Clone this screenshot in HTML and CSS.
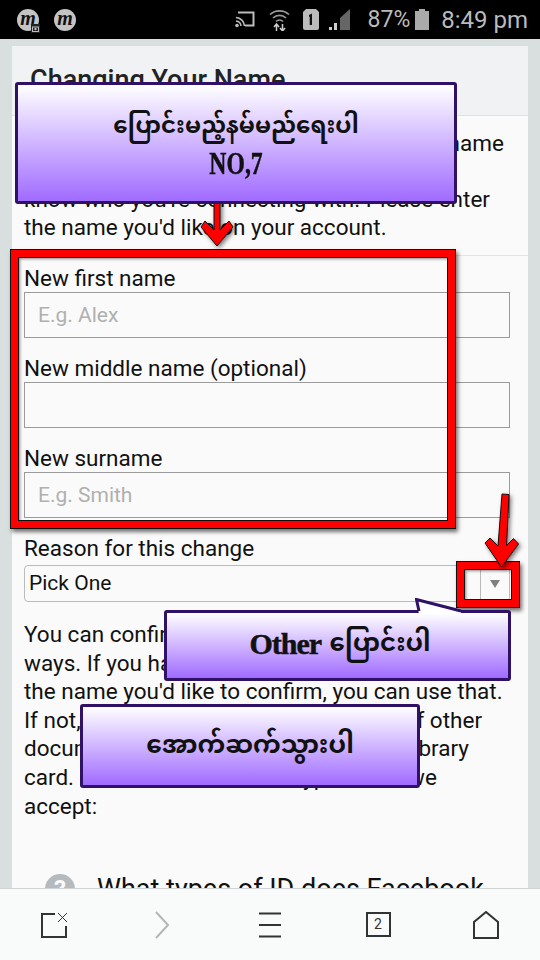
FILE: index.html
```html
<!DOCTYPE html>
<html lang="my">
<head>
    <meta charset="UTF-8">
    <meta name="viewport" content="width=device-width, initial-scale=1.0">
    <title>Changing Your Name</title>
    <link rel="stylesheet" href="styles.css">
</head>
<body>
    <div class="status-bar">
        <div class="status-apps">
            <span class="app-dot">m<svg class="app-badge" viewBox="0 0 9 9"><rect width="9" height="9" fill="#222"/><rect x="1.5" y="3" width="6" height="4.500" fill="none" stroke="#bbb"/><circle cx="4.500" cy="5" r="1.200" fill="#bbb"/></svg></span>
            <span class="app-dot">m</span>
        </div>
        <div class="status-icons">
            <svg class="icon-cast" width="20" height="17" viewBox="0 0 20 17"><path d="M3 1.500h15.500v13H10" fill="none" stroke="#bbb" stroke-width="2"/><path d="M1 6.500a9 9 0 0 1 8.500 8.500M1 10a5.500 5.500 0 0 1 5 5" fill="none" stroke="#bbb" stroke-width="1.600"/><circle cx="2" cy="14.500" r="1.800" fill="#bbb"/></svg>
            <svg class="icon-wifi" width="21" height="23" viewBox="0 0 21 23"><path d="M1 6.500a14 14 0 0 1 19 0M4 10a9.500 9.500 0 0 1 13 0M7 13.500a5 5 0 0 1 7 0" fill="none" stroke="#999" stroke-width="1.700"/><path d="M7.500 23v-6M5 19l2.500-3 2.500 3M13.500 16v6M11 20l2.500 3 2.500-3" fill="none" stroke="#ccc" stroke-width="1.500"/></svg>
            <svg class="icon-sim" width="16" height="21" viewBox="0 0 16 21"><path d="M3 0h10l3 3v16a2 2 0 0 1-2 2H2a2 2 0 0 1-2-2V3z" fill="#bbb"/><path d="M6 6l3-1.500V16H6.700V7.500L6 8z" fill="#111"/></svg>
            <svg class="icon-signal" width="21" height="21" viewBox="0 0 21 21"><path d="M21 0v21H11V9z" fill="#666"/><path d="M0 21v-3h3v3zM5 21v-7h3v7z" fill="#ccc"/></svg>
            <span class="status-pct">87%</span>
            <svg class="icon-battery" width="14" height="21" viewBox="0 0 14 21"><path d="M4 0h6v2h4v19H0V2h4z" fill="#aaa"/></svg>
            <span class="status-time">8:49 pm</span>
        </div>
    </div>

    <div class="page">
        <div class="card">
            <h2 class="card-head">Changing Your Name</h2>
            <p class="intro">Facebook is a place where friends use the name they go by in everyday life, so you always<br>know who you're connecting with. Please enter the name you'd like on your account.</p>
            <form class="name-form">
                <label class="field-label">New first name</label>
                <input class="field-input" type="text" placeholder="E.g. Alex">
                <label class="field-label">New middle name (optional)</label>
                <input class="field-input" type="text">
                <label class="field-label">New surname</label>
                <input class="field-input" type="text" placeholder="E.g. Smith">
                <label class="reason-label">Reason for this change</label>
                <div class="select-box">
                    <span class="select-text">Pick One</span>
                    <span class="select-btn"><span class="select-caret"></span></span>
                </div>
            </form>
            <p class="confirm">You can confirm your name in a few different ways. If you have an ID that has your name and the name you'd like to confirm, you can use that. If not, you can use two different types of other documents, such as a school ID and a library card. See info about all the types of ID we accept:</p>
            <div class="faq-row">
                <span class="faq-icon">?</span>
                <span class="faq-text">What types of ID does Facebook</span>
            </div>
        </div>
    </div>

    <nav class="bottom-nav">
        <svg width="27" height="26" viewBox="0 0 27 26"><path d="M14 2H1v23h24V14" fill="none" stroke="#333" stroke-width="2"/><path d="M17 1l9 9M26 1l-9 9" stroke="#333" stroke-width="1"/></svg>
        <svg width="16" height="28" viewBox="0 0 16 28"><path d="M2 1l12 13L2 27" fill="none" stroke="#b5b5b5" stroke-width="2"/></svg>
        <svg width="22" height="26" viewBox="0 0 22 26"><path d="M0 1.500h22M0 13h22M0 24.500h22" stroke="#333" stroke-width="2"/></svg>
        <span class="tab-count">2</span>
        <svg width="26" height="28" viewBox="0 0 26 28"><path d="M1 27V11L13 1l12 10v16z" fill="none" stroke="#333" stroke-width="2"/></svg>
    </nav>

    <!-- annotations drawn over the screenshot -->
    <div class="mark mark-form"></div>
    <div class="mark mark-select"></div>
    <svg class="arrow arrow-one" width="40" height="50" viewBox="0 0 40 50"><path d="M17 0h6v33l9-9 4 6-16 19L4 30l4-6 9 9z" fill="#f00" stroke="#111" stroke-width="1"/></svg>
    <svg class="arrow arrow-two" width="36" height="76" viewBox="0 0 36 76"><path d="M18 1l7 .5-2.500 51 7-7 5 5.500-17 23L1 50l5-5 8 8z" fill="#f00" stroke="#111" stroke-width="1"/></svg>
    <div class="callout callout-one">
        <span class="callout-line">ပြောင်းမည့်နမ်မည်ရေးပါ</span>
        <span class="stencil">NO,7</span>
    </div>
    <div class="callout callout-two">
        <svg class="callout-tail" width="52" height="16" viewBox="0 0 52 16"><path d="M4 16L1 2l45 12v2z" fill="#fff"/><path d="M4 13L1.500 1.500 46 13" fill="none" stroke="#2f1166" stroke-width="3"/></svg>
        <span class="callout-row"><span class="stencil stencil-other">Other</span><span>ပြောင်းပါ</span></span>
    </div>
    <div class="callout callout-three">
        <span class="callout-line">အောက်ဆက်သွားပါ</span>
    </div>
</body>
</html>
```

FILE: styles.css
```css
html, body {
    margin: 0;
    height: 100%;
    overflow: hidden;
}

body {
    position: relative;
    width: 540px;
    height: 960px;
    display: flex;
    flex-direction: column;
    font-family: "Roboto", "Noto Sans", sans-serif;
    color: #111;
    background: #d9dfde;
}

/* --- status bar --- */
.status-bar {
    height: 39px;
    flex: none;
    background: #000;
    display: flex;
    justify-content: space-between;
    align-items: center;
    padding: 0 12px 0 17px;
    box-sizing: border-box;
}
.status-apps { display: flex; gap: 15px; }
.app-dot {
    position: relative;
    width: 22px;
    height: 22px;
    border-radius: 50%;
    background: #c4c4c4;
    color: #111;
    font: italic 700 20px/19px "Liberation Serif", serif;
    text-align: center;
}
.app-badge { position: absolute; right: -1px; bottom: -2px; width: 9px; height: 9px; }
.status-icons { display: flex; align-items: center; }
.icon-cast { margin-right: 14px; }
.icon-wifi { margin-right: 13px; }
.icon-sim { margin-right: 10px; }
.icon-signal { margin-right: 18px; }
.status-pct { font-size: 23px; color: #bbb; margin-right: 5px; }
.icon-battery { margin-right: 12px; }
.status-time { font-size: 24px; color: #bbb; }

/* --- page --- */
.page {
    flex: 1;
    min-height: 0;
    overflow: hidden;
    padding: 7px 12px 0;
}
.card {
    background: #fafafa;
    height: 900px;
}
.card-head {
    margin: 0;
    height: 70px;
    box-sizing: border-box;
    padding: 19px 18px 0;
    background: #f0f2f3;
    border-bottom: 1px solid #dfe1e2;
    font-size: 27px;
    font-weight: 500;
    line-height: 30px;
    color: #222;
}
.intro {
    margin: 0;
    padding: 13px 18px 14px 12px;
    font-size: 22.500px;
    line-height: 28px;
    border-bottom: 1px solid #e2e4e5;
}
.name-form { padding: 8px 18px 0 12px; }
.field-label {
    display: block;
    font-size: 22.500px;
    line-height: 28px;
}
.field-input {
    display: block;
    width: 100%;
    height: 46px;
    box-sizing: border-box;
    margin-bottom: 16px;
    padding: 0 13px;
    border: 1px solid #9b9b9b;
    background: #fafafa;
    border-radius: 0;
    font: 21px "Roboto", sans-serif;
}
.field-input::placeholder { color: #b0b0b0; }
.reason-label {
    display: block;
    font-size: 22.500px;
    line-height: 28px;
}
.select-box {
    display: flex;
    justify-content: space-between;
    align-items: center;
    height: 37px;
    margin-top: 3px;
    box-sizing: border-box;
    border: 1px solid #bbb;
    border-radius: 4px;
    padding-left: 4px;
}
.select-text { font-size: 21px; line-height: 33px; }
.select-btn {
    width: 29px;
    height: 100%;
    display: flex;
    align-items: center;
    justify-content: center;
    border-left: 1px solid #bbb;
    box-sizing: border-box;
}
.select-caret {
    width: 0;
    height: 0;
    border-left: 5px solid transparent;
    border-right: 5px solid transparent;
    border-top: 8px solid #808080;
}
.confirm {
    margin: 18px 18px 0 12px;
    font-size: 22.500px;
    line-height: 28.600px;
}
.faq-row {
    display: flex;
    gap: 22px;
    padding: 54px 0 0 33px;
    align-items: flex-start;
}
.faq-icon {
    width: 30px;
    height: 30px;
    flex: none;
    border-radius: 50%;
    background: #b4babd;
    color: #fafafa;
    font-size: 24px;
    font-weight: 700;
    line-height: 30px;
    text-align: center;
}
.faq-text { font-size: 27px; line-height: 30px; white-space: nowrap; }

/* --- bottom nav --- */
.bottom-nav {
    height: 72px;
    flex: none;
    box-sizing: border-box;
    background: #f9fafa;
    border-top: 1px solid #cfd2d3;
    display: grid;
    grid-template-columns: repeat(5, 108px);
    justify-items: center;
    align-items: center;
}
.tab-count {
    width: 25px;
    height: 25px;
    box-sizing: border-box;
    border: 2px solid #333;
    font-size: 14px;
    line-height: 21px;
    text-align: center;
    color: #333;
}

/* --- annotations --- */
.mark {
    position: absolute;
    box-sizing: border-box;
    border: 8px solid #f00;
    outline: 1px solid #111;
    outline-offset: -1px;
    box-shadow: 2px 3px 4px rgba(0, 0, 0, 0.55), inset 0 0 0 1px #111, inset 2px 2px 3px rgba(0, 0, 0, 0.45);
}
.mark-form { left: 10px; top: 249px; width: 446px; height: 280px; }
.mark-select { left: 456px; top: 561px; width: 64px; height: 47px; }
.arrow { position: absolute; filter: drop-shadow(2px 2px 2px rgba(0, 0, 0, 0.5)); }
.arrow-one { left: 197px; top: 197px; }
.arrow-two { left: 484px; top: 493px; }

.callout {
    position: absolute;
    box-sizing: border-box;
    border: 3px solid #2f1166;
    border-radius: 3px;
    background: linear-gradient(#fff, #a06bff);
    display: flex;
    flex-direction: column;
    align-items: center;
    justify-content: center;
    color: #111;
    font-family: "Noto Sans Myanmar", "Padauk", "Noto Sans", serif;
    font-size: 25px;
    font-weight: 700;
    line-height: 36px;
}
/* tall heavy latin in the callouts, squeezed sideways */
.stencil {
    display: inline-block;
    font: 700 32px/34px "Liberation Serif", serif;
    transform: scaleX(0.74);
    -webkit-text-stroke: 0.5px #111;
}
.callout-row { display: flex; align-items: center; gap: 8px; padding-left: 5px; font-size: 24.500px; }
.stencil-other { font-size: 30px; transform: none; letter-spacing: -1px; width: 72px; margin-bottom: 4px; white-space: nowrap; }
.callout-one { left: 15px; top: 82px; width: 442px; height: 122px; }
.callout-one .callout-line { font-size: 23px; margin-top: 3px; }
.callout-two { left: 164px; top: 610px; width: 347px; height: 71px; }
.callout-three { left: 80px; top: 704px; width: 340px; height: 84px; }
.callout-three .callout-line { margin-top: 4px; }
.callout-tail { position: absolute; left: 248px; top: -15px; }
```
